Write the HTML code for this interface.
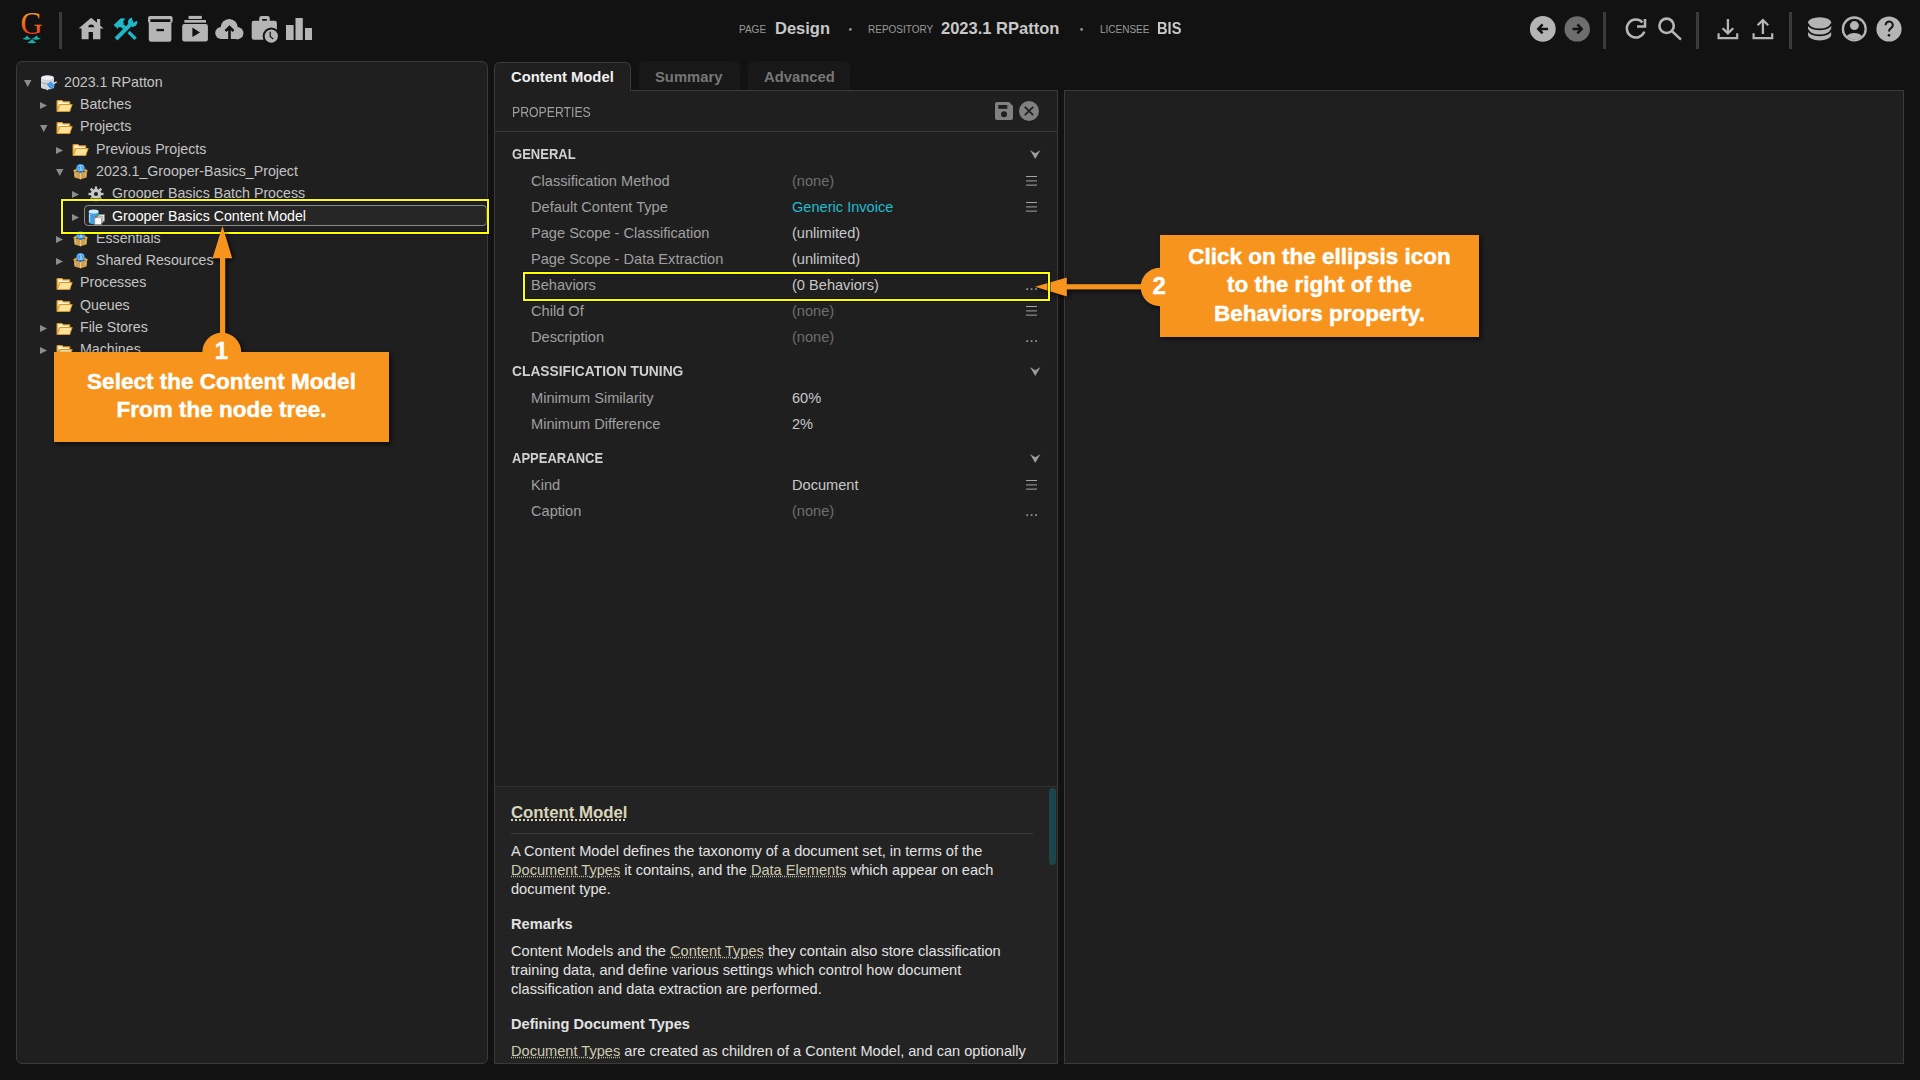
<!DOCTYPE html>
<html><head><meta charset="utf-8">
<style>
*{box-sizing:border-box;margin:0;padding:0}
html,body{width:1920px;height:1080px;overflow:hidden;background:#121212;font-family:"Liberation Sans",sans-serif;position:relative}
.a{position:absolute}
.t{position:absolute;white-space:nowrap;line-height:1}
svg{position:absolute;overflow:visible}
.sep{position:absolute;width:3px;background:#3a3a3a;top:12px;height:37px}
#left{left:16px;top:61px;width:472px;height:1003px;background:#1f1f1f;border:1px solid #3a3a3a;border-radius:6px}
#props{left:494px;top:90px;width:564px;height:974px;background:#1f1f1f;border:1px solid #3a3a3a}
#right{left:1064px;top:90px;width:840px;height:974px;background:#1f1f1f;border:1px solid #3a3a3a}
.tab{position:absolute;top:61px;height:29px;background:#181818;border-radius:6px 6px 0 0}
.tabt{font-weight:bold;font-size:14.8px;color:#777}
.tree{color:#c4c4c4;font-size:14.2px}
.lbl{color:#a0a0a0;font-size:14.6px}
.val{color:#c8c8c8;font-size:14.6px}
.none{color:#6e6e6e}
.sec{color:#d0d0d0;font-size:13.4px;font-weight:bold}
.help{color:#e2e2e2;font-size:14.9px}
.lk{color:#cfccb2;text-decoration:underline dotted #b8b6a0;text-underline-offset:1px}
.hh{color:#d9d5bb;font-weight:bold}
.uh{text-decoration:underline dotted #d9d5bb;text-decoration-thickness:2px;text-underline-offset:1px}
.orange{background:#f7941d;box-shadow:3px 3px 4px rgba(0,0,0,.6)}
.call{color:#fff;font-weight:bold;text-align:center;font-size:22.5px;line-height:28.5px;-webkit-text-stroke:0.45px #fff}
</style></head><body>
<svg width="0" height="0" style="position:absolute">
<defs>
<symbol id="i-folder" viewBox="0 0 17 16">
<path d="M1 2.5h5.2l1.2 1.3h6.4v9.7H1z" fill="#f3c96a" stroke="#d9962e" stroke-width="1"/>
<path d="M2.3 3.5h3.5l1.2 1.3h5.8v1.5H2.3z" fill="#fff6d6"/>
<path d="M1.3 13.5l2.6-7h12.3l-2.6 7z" fill="#fde39a" stroke="#d9962e" stroke-width="1"/>
</symbol>
<symbol id="i-db" viewBox="0 0 17 16">
<path d="M1 2.6C1 1.2 3.9 0.2 7.5 0.2S14 1.2 14 2.6V12c0 1.4-2.9 2.3-6.5 2.3S1 13.4 1 12z" fill="#d2d6dc"/>
<ellipse cx="7.5" cy="2.8" rx="5.6" ry="1.9" fill="#eef3f8"/>
<path d="M1.3 7.2c1 1 3.3 1.5 6.2 1.5s5.2-.5 6.2-1.5" stroke="#9aa2aa" stroke-width=".9" fill="none"/>
<path d="M1.6 5c.6.2.6 1 .2 1.2M1.6 9.6c.6.2.6 1 .2 1.2" stroke="#fff" stroke-width=".8" fill="none"/>
<path d="M7 9.6 L10.6 6.2 L15 10.6 L11.5 14.2 Z" fill="#4aa6ec"/>
<path d="M7.6 9.8 L11.2 13.5" stroke="#1f6fbf" stroke-width=".9"/>
<path d="M9.3 7.8 L13 11.6" stroke="#2a7dd0" stroke-width=".8"/>
<path d="M13.6 8.6 L16.6 6.8" stroke="#e8e8e8" stroke-width="1.4"/>
<path d="M8.2 13.5 L6.8 15.2" stroke="#e0dcd4" stroke-width="1.3"/>
</symbol>
<symbol id="i-pkg" viewBox="0 0 17 16">
<path d="M1.2 6.6 L4.2 4.6 L6 6.5 L2.4 8.4 Z" fill="#e8a838"/>
<path d="M15.8 6.6 L12.8 4.6 L11 6.5 L14.6 8.4 Z" fill="#e8a838"/>
<path d="M1.8 7.2 L8.5 8.6 L15.2 7.2 L14.6 13.4 L8.5 15.3 L2.4 13.4 Z" fill="#cf9f52"/>
<path d="M8.5 8.6 V15.3" stroke="#f0c878" stroke-width="1"/>
<path d="M3.6 9.6 V12.4 M13.4 9.6 V12.4" stroke="#e8cc90" stroke-width=".8"/>
<circle cx="8.5" cy="4.2" r="4.4" fill="#2a8ae0"/>
<circle cx="8.6" cy="3.9" r="3.2" fill="#8cc8f4"/>
<path d="M6 3.6 L7.4 2.6 L7.2 6 M9 2.4 L10.6 3.2 L11 5.6" stroke="#2a7ad0" stroke-width=".9" fill="none"/>
<circle cx="8.5" cy="7.6" r=".9" fill="#1a6ad0"/>
</symbol>
<symbol id="i-gear" viewBox="0 0 17 16">
<g transform="translate(8,8)" fill="#c8c8c8">
<circle r="5.2"/>
<rect x="-1.2" y="-7.5" width="2.4" height="15"/>
<rect x="-1.2" y="-7.5" width="2.4" height="15" transform="rotate(45)"/>
<rect x="-1.2" y="-7.5" width="2.4" height="15" transform="rotate(90)"/>
<rect x="-1.2" y="-7.5" width="2.4" height="15" transform="rotate(135)"/>
<circle r="2" fill="#1f1f1f"/>
</g>
</symbol>
<symbol id="i-cm" viewBox="0 0 17 16">
<path d="M0.8 2.6v10.6c0 1.1 2.2 2 4.9 2s4.9-.9 4.9-2V2.6z" fill="#3f9fe0"/>
<path d="M1.6 4.5v8.6" stroke="#a8dcfa" stroke-width="1.1"/>
<ellipse cx="5.7" cy="2.6" rx="4.9" ry="2" fill="#cfeeff"/>
<rect x="10" y="5.6" width="6.4" height="6.6" fill="#f2f2f2" stroke="#8a8a8a" stroke-width=".7"/>
<rect x="8.4" y="7.2" width="6.4" height="6.6" fill="#f6f6f6" stroke="#8a8a8a" stroke-width=".7"/>
<rect x="6.8" y="8.8" width="6.6" height="6.8" fill="#ffffff" stroke="#8a8a8a" stroke-width=".7"/>
<path d="M7.2 8.6 q1-1.6 2.4-1.4" stroke="#e03a2a" stroke-width="1.2" fill="none"/>
<path d="M9.4 7 q.8-1.4 2.2-1.4" stroke="#2eb04a" stroke-width="1.1" fill="none"/>
</symbol>
</defs></svg>
<!-- top bar -->
<svg class="a" style="left:0;top:0" width="1920" height="60">
<defs>
<linearGradient id="gG" x1="0" y1="0" x2="0" y2="1"><stop offset="0.1" stop-color="#f7a51c"/><stop offset="1" stop-color="#e8201f"/></linearGradient>
</defs>
<text x="20.6" y="33.9" font-family="Liberation Serif" font-size="30.5" fill="url(#gG)">G</text>
<path d="M22.2 38.8 Q25 38.4 27 35.4 Q29 38.4 31.2 38.8 Q26.7 40.6 22.2 38.8z M31.6 38.8 Q34.4 38.4 36.4 35.4 Q38.4 38.4 41 38.8 Q36.3 40.6 31.6 38.8z M27.2 42.4 Q30 42 32 39 Q34 42 36.4 42.4 Q31.8 44.2 27.2 42.4z" fill="#1aaea8"/>
<!-- home -->
<path d="M78.6 28.6 L91.2 17.7 L97 22.7 V19 H100.2 V25.5 L103.6 28.6 H100.4 V39.2 H93 V32 H88.6 V39.2 H81.6 V28.6 Z" fill="#b5b5b5"/>
<path d="M88.3 27.2 a2.9 2.6 0 0 1 5.8 0z" fill="#121212"/>
<!-- tools -->
<g fill="#20b8c8">
<path d="M114.6 37.6 L128.4 23.8 L131.2 26.6 L117.4 40.4 Z"/>
<circle cx="132.6" cy="22.3" r="4.7"/>
<path d="M113.6 25.1 L120.8 18.2 L125.4 18.4 L123.1 21.4 L123.8 23.2 L123.5 24.6 L126.2 26.4 L122.9 29.2 L121.6 27.6 L118.4 27.1 L117.8 29 L116 27.3 Z"/>
<path d="M128.6 32 L135.6 38.9" stroke="#20b8c8" stroke-width="3.3"/>
</g>
<path d="M131.3 15.8 L139.2 19.6 L133.3 22.7 Z" fill="#121212"/>
<!-- archive -->
<rect x="148" y="16" width="24.6" height="7" rx="2" fill="#b5b5b5"/>
<rect x="150.4" y="19.2" width="20" height="2.8" fill="#121212"/>
<path d="M148.8 22.2 H171.4 V39.6 a2.2 2.2 0 0 1 -2.2 2.2 H151 a2.2 2.2 0 0 1 -2.2 -2.2 Z" fill="#b5b5b5"/>
<rect x="156.5" y="28.9" width="7.5" height="2.3" fill="#121212"/>
<!-- play stack -->
<rect x="188.6" y="15.9" width="13.2" height="3.1" fill="#b5b5b5"/>
<rect x="184.4" y="20" width="21.6" height="2.7" fill="#b5b5b5"/>
<rect x="182.2" y="23.9" width="25.7" height="17.7" rx="2.3" fill="#b5b5b5"/>
<path d="M192.4 27.6 L200 32.4 L192.4 37.1 Z" fill="#121212"/>
<!-- cloud -->
<g fill="#b5b5b5">
<circle cx="229.2" cy="27.6" r="8.6"/>
<circle cx="221.2" cy="33" r="6"/>
<circle cx="237.2" cy="33.2" r="6.2"/>
<rect x="221" y="31" width="16" height="8"/>
</g>
<path d="M229.5 39 V27 M225.5 31 L229.5 27 L233.5 31" stroke="#121212" stroke-width="2.6" fill="none"/>
<!-- briefcase clock -->
<path d="M259.2 21 V18.3 a2.4 2.4 0 0 1 2.4 -2.4 H267.4 a2.4 2.4 0 0 1 2.4 2.4 V21 H266.8 V19 H262.2 V21 Z" fill="#b5b5b5"/>
<rect x="251.7" y="20.8" width="25.2" height="18.9" rx="2.2" fill="#b5b5b5"/>
<circle cx="271.3" cy="36.2" r="8.6" fill="#121212"/>
<circle cx="271.3" cy="36.2" r="6.6" fill="#b5b5b5"/>
<path d="M270.2 31.8 V36.4 L273.2 39" stroke="#121212" stroke-width="1.2" fill="none"/>
<!-- bars -->
<rect x="286" y="25" width="7.6" height="15" fill="#b5b5b5"/>
<rect x="295.5" y="18" width="7.3" height="22" fill="#b5b5b5"/>
<rect x="305" y="28" width="7" height="12" fill="#b5b5b5"/>
<!-- center dots -->
<circle cx="850.4" cy="29.4" r="1.3" fill="#9a9a9a"/>
<circle cx="1081.6" cy="29.4" r="1.3" fill="#9a9a9a"/>
<!-- back / fwd -->
<circle cx="1542.8" cy="28.9" r="12.9" fill="#b5b5b5"/>
<path d="M1542.6 24.4 L1538.3 28.9 L1542.6 33.3 M1538.6 28.9 H1548.1" stroke="#121212" stroke-width="2.5" fill="none"/>
<circle cx="1577.2" cy="28.9" r="12.7" fill="#6e6e6e"/>
<path d="M1577.4 24.4 L1581.7 28.9 L1577.4 33.3 M1581.4 28.9 H1572.5" stroke="#121212" stroke-width="2.5" fill="none"/>
<!-- refresh -->
<path d="M1642.4 22.4 A9 9 0 1 0 1644.3 31.6" stroke="#b5b5b5" stroke-width="2.5" fill="none"/>
<path d="M1637 26.5 H1645 V19" stroke="#b5b5b5" stroke-width="2.6" fill="none"/>
<!-- search -->
<circle cx="1666.6" cy="25.8" r="7.2" stroke="#b5b5b5" stroke-width="2.6" fill="none"/>
<path d="M1671.8 31 L1681 39.6" stroke="#b5b5b5" stroke-width="2.5"/>
<!-- download -->
<path d="M1718.6 33.2 V38.1 H1737.2 V33.2" stroke="#b5b5b5" stroke-width="2.2" fill="none"/>
<path d="M1727.9 19 V33.4 M1722.6 28.2 L1727.9 33.4 L1733.2 28.2" stroke="#b5b5b5" stroke-width="2.3" fill="none"/>
<!-- upload -->
<path d="M1753.6 33.2 V38.1 H1772.2 V33.2" stroke="#b5b5b5" stroke-width="2.2" fill="none"/>
<path d="M1762.9 34 V20 M1757.6 25.2 L1762.9 20 L1768.2 25.2" stroke="#b5b5b5" stroke-width="2.3" fill="none"/>
<!-- database -->
<path d="M1808 22.5 V35 A11.6 5.4 0 0 0 1831.2 35 V22.5 Z" fill="#b5b5b5"/>
<ellipse cx="1819.6" cy="22.5" rx="11.6" ry="5.3" fill="#b5b5b5"/>
<path d="M1808 23.6 A11.6 5.8 0 0 0 1831.2 23.6 M1808 29.6 A11.6 5.8 0 0 0 1831.2 29.6" stroke="#121212" stroke-width="1.7" fill="none"/>
<!-- user -->
<circle cx="1854.3" cy="28.9" r="11.4" stroke="#b5b5b5" stroke-width="2.3" fill="none"/>
<circle cx="1854.4" cy="25.6" r="4.5" fill="#b5b5b5"/>
<clipPath id="uc"><circle cx="1854.3" cy="28.9" r="10.5"/></clipPath>
<circle cx="1854.3" cy="44.5" r="11.6" fill="#b5b5b5" clip-path="url(#uc)"/>
<!-- help -->
<circle cx="1889" cy="29" r="12.6" fill="#b5b5b5"/>
<path d="M1885.6 25.2 a3.6 3.4 0 1 1 5.6 2.6 c-1.6 1 -2.2 1.6 -2.2 3.6" stroke="#121212" stroke-width="2" fill="none"/>
<circle cx="1889" cy="35.2" r="1.3" fill="#121212"/>
</svg>
<div class="sep" style="left:59px"></div>
<div class="sep" style="left:1603px"></div>
<div class="sep" style="left:1696px"></div>
<div class="sep" style="left:1789px"></div>

<div class="t" style="left:739px;top:24.8px;font-size:10px;color:#9a9a9a">PAGE</div>
<div class="t" style="left:775px;top:20px;font-size:16.5px;font-weight:bold;color:#c8c8c8">Design</div>
<div class="t" style="left:848px;top:24.8px;font-size:10px;color:#9a9a9a">·</div>
<div class="t" style="left:868px;top:24.8px;font-size:10px;color:#9a9a9a">REPOSITORY</div>
<div class="t" style="left:941px;top:20px;font-size:16.5px;font-weight:bold;color:#c8c8c8">2023.1 RPatton</div>
<div class="t" style="left:1080px;top:24.8px;font-size:10px;color:#9a9a9a">·</div>
<div class="t" style="left:1100px;top:24.8px;font-size:10px;color:#9a9a9a">LICENSEE</div>
<div class="t" style="left:1157px;top:20px;font-size:16.5px;font-weight:bold;color:#c8c8c8;transform:scaleX(0.89);transform-origin:0 0">BIS</div>

<!-- panels -->
<div id="left" class="a"></div>
<div id="props" class="a"></div>
<div id="right" class="a"></div>

<!-- tabs -->
<div class="a" style="left:494px;top:62px;width:137px;height:29px;background:#1f1f1f;border:1px solid #3a3a3a;border-bottom:none;border-radius:6px 6px 0 0"></div>
<div class="t tabt" style="left:511px;top:69.8px;color:#f0f0f0">Content Model</div>
<div class="tab" style="left:639px;width:101px"></div>
<div class="t tabt" style="left:655px;top:69.5px">Summary</div>
<div class="tab" style="left:748px;width:102px"></div>
<div class="t tabt" style="left:764px;top:69.5px">Advanced</div>

<!-- props -->
<div class="t lbl" style="left:511.5px;top:104.64px;font-size:14.6px;transform:scaleX(0.84);transform-origin:0 0">PROPERTIES</div>
<svg class="a" style="left:995px;top:102px" width="18" height="18"><path d="M0 2a2 2 0 0 1 2-2h12l4 4v12a2 2 0 0 1-2 2H2a2 2 0 0 1-2-2z" fill="#808080"/><rect x="3.3" y="3" width="9" height="3.8" fill="#1f1f1f"/><circle cx="9" cy="12.3" r="3" fill="#1f1f1f"/></svg>
<svg class="a" style="left:1019px;top:101px" width="20" height="20"><circle cx="10" cy="10" r="10" fill="#808080"/><path d="M5.8 5.8l8.4 8.4M14.2 5.8l-8.4 8.4" stroke="#1f1f1f" stroke-width="1.8"/></svg>
<div class="a" style="left:495px;top:131px;width:562px;height:1px;background:#3a3a3a"></div>
<div class="t sec" style="left:511.5px;top:147.15px;font-size:14px;transform:scaleX(0.93);transform-origin:0 0">GENERAL</div>
<svg class="a" style="left:1029.5px;top:150px" width="11" height="9"><polygon points="0,0 5.25,3.2 10.5,0 5.25,9" fill="#9a9a9a"/></svg>
<div class="t lbl" style="left:531px;top:173.64px;font-size:14.6px">Classification Method</div>
<div class="t val none" style="left:792px;top:173.64px;font-size:14.6px">(none)</div>
<svg class="a" style="left:1026px;top:174.8px" width="11" height="11"><path d="M0 1.5h11M0 5.9h11M0 10.1h11" stroke="#a4a4a4" stroke-width="1"/></svg>
<div class="t lbl" style="left:531px;top:199.64px;font-size:14.6px">Default Content Type</div>
<div class="t val" style="left:792px;top:199.64px;font-size:14.6px;color:#1fbccf">Generic Invoice</div>
<svg class="a" style="left:1026px;top:200.8px" width="11" height="11"><path d="M0 1.5h11M0 5.9h11M0 10.1h11" stroke="#a4a4a4" stroke-width="1"/></svg>
<div class="t lbl" style="left:531px;top:225.64px;font-size:14.6px">Page Scope - Classification</div>
<div class="t val" style="left:792px;top:225.64px;font-size:14.6px">(unlimited)</div>
<div class="t lbl" style="left:531px;top:251.64px;font-size:14.6px">Page Scope - Data Extraction</div>
<div class="t val" style="left:792px;top:251.64px;font-size:14.6px">(unlimited)</div>
<div class="t lbl" style="left:531px;top:277.64px;font-size:14.6px">Behaviors</div>
<div class="t val" style="left:792px;top:277.64px;font-size:14.6px">(0 Behaviors)</div>
<svg class="a" style="left:1025.5px;top:288px" width="12" height="3"><rect x="0.3" y="0.2" width="1.8" height="1.8" fill="#8e8e8e"/><rect x="4.7" y="0.2" width="1.8" height="1.8" fill="#8e8e8e"/><rect x="9.1" y="0.2" width="1.8" height="1.8" fill="#8e8e8e"/></svg>
<div class="t lbl" style="left:531px;top:303.64px;font-size:14.6px">Child Of</div>
<div class="t val none" style="left:792px;top:303.64px;font-size:14.6px">(none)</div>
<svg class="a" style="left:1026px;top:304.8px" width="11" height="11"><path d="M0 1.5h11M0 5.9h11M0 10.1h11" stroke="#a4a4a4" stroke-width="1"/></svg>
<div class="t lbl" style="left:531px;top:329.64px;font-size:14.6px">Description</div>
<div class="t val none" style="left:792px;top:329.64px;font-size:14.6px">(none)</div>
<svg class="a" style="left:1025.5px;top:340px" width="12" height="3"><rect x="0.3" y="0.2" width="1.8" height="1.8" fill="#8e8e8e"/><rect x="4.7" y="0.2" width="1.8" height="1.8" fill="#8e8e8e"/><rect x="9.1" y="0.2" width="1.8" height="1.8" fill="#8e8e8e"/></svg>
<div class="t sec" style="left:511.5px;top:363.9px;font-size:14px;transform:scaleX(0.985);transform-origin:0 0">CLASSIFICATION TUNING</div>
<svg class="a" style="left:1029.5px;top:366.8px" width="11" height="9"><polygon points="0,0 5.25,3.2 10.5,0 5.25,9" fill="#9a9a9a"/></svg>
<div class="t lbl" style="left:531px;top:390.64px;font-size:14.6px">Minimum Similarity</div>
<div class="t val" style="left:792px;top:390.64px;font-size:14.6px">60%</div>
<div class="t lbl" style="left:531px;top:416.64px;font-size:14.6px">Minimum Difference</div>
<div class="t val" style="left:792px;top:416.64px;font-size:14.6px">2%</div>
<div class="t sec" style="left:511.5px;top:451.15px;font-size:14px;transform:scaleX(0.93);transform-origin:0 0">APPEARANCE</div>
<svg class="a" style="left:1029.5px;top:454px" width="11" height="9"><polygon points="0,0 5.25,3.2 10.5,0 5.25,9" fill="#9a9a9a"/></svg>
<div class="t lbl" style="left:531px;top:477.64px;font-size:14.6px">Kind</div>
<div class="t val" style="left:792px;top:477.64px;font-size:14.6px">Document</div>
<svg class="a" style="left:1026px;top:478.8px" width="11" height="11"><path d="M0 1.5h11M0 5.9h11M0 10.1h11" stroke="#a4a4a4" stroke-width="1"/></svg>
<div class="t lbl" style="left:531px;top:503.64px;font-size:14.6px">Caption</div>
<div class="t val none" style="left:792px;top:503.64px;font-size:14.6px">(none)</div>
<svg class="a" style="left:1025.5px;top:514px" width="12" height="3"><rect x="0.3" y="0.2" width="1.8" height="1.8" fill="#8e8e8e"/><rect x="4.7" y="0.2" width="1.8" height="1.8" fill="#8e8e8e"/><rect x="9.1" y="0.2" width="1.8" height="1.8" fill="#8e8e8e"/></svg>
<!-- help -->
<div class="a" style="left:495px;top:786px;width:562px;height:277px;background:#232323;border-top:1px solid #303030;overflow:hidden">
<div class="t hh" style="left:16px;top:18.3px;font-size:16.8px"><span class="uh">Content Model</span></div>
<div class="a" style="left:16px;top:46px;width:522px;height:1px;background:#3a3a3a"></div>
<div class="t help" style="left:16px;top:57.24px;font-size:14.6px">A Content Model defines the taxonomy of a document set, in terms of the</div>
<div class="t help" style="left:16px;top:76.14px;font-size:14.6px"><span class="lk">Document Types</span> it contains, and the <span class="lk">Data Elements</span> which appear on each</div>
<div class="t help" style="left:16px;top:94.94px;font-size:14.6px">document type.</div>
<div class="t help" style="left:16px;top:156.6px;font-size:14.6px">Content Models and the <span class="lk">Content Types</span> they contain also store classification</div>
<div class="t help" style="left:16px;top:175.6px;font-size:14.6px">training data, and define various settings which control how document</div>
<div class="t help" style="left:16px;top:194.5px;font-size:14.6px">classification and data extraction are performed.</div>
<div class="t help" style="left:16px;top:256.9px;font-size:14.6px"><span class="lk">Document Types</span> are created as children of a Content Model, and can optionally</div>
<div class="t help" style="left:16px;top:129.9px;font-size:14.6px;font-weight:bold">Remarks</div>
<div class="t help" style="left:16px;top:229.9px;font-size:14.6px;font-weight:bold">Defining Document Types</div>
</div>
<div class="a" style="left:1049px;top:788px;width:7px;height:77px;background:#1a464c;border-radius:4px"></div>
<!-- tree -->
<div class="a" style="left:84px;top:205px;width:403px;height:21px;background:#262626;border:1px solid #8a8a8a;border-radius:4px"></div>
<svg class="a" style="left:24px;top:80.1px" width="8" height="7"><polygon points="0,0 7.5,0 3.75,7" fill="#8c8c8c"/></svg>
<svg class="a" style="left:40px;top:74.8px" width="17" height="16"><use href="#i-db"/></svg>
<div class="t tree" style="left:64px;top:74.7px">2023.1 RPatton</div>
<svg class="a" style="left:40px;top:102.0px" width="8" height="7"><polygon points="0,0 7,3.5 0,7" fill="#8c8c8c"/></svg>
<svg class="a" style="left:56px;top:97.5px" width="17" height="16"><use href="#i-folder"/></svg>
<div class="t tree" style="left:80px;top:97.0px">Batches</div>
<svg class="a" style="left:40px;top:124.7px" width="8" height="7"><polygon points="0,0 7.5,0 3.75,7" fill="#8c8c8c"/></svg>
<svg class="a" style="left:56px;top:119.8px" width="17" height="16"><use href="#i-folder"/></svg>
<div class="t tree" style="left:80px;top:119.3px">Projects</div>
<svg class="a" style="left:56px;top:146.6px" width="8" height="7"><polygon points="0,0 7,3.5 0,7" fill="#8c8c8c"/></svg>
<svg class="a" style="left:72px;top:142.1px" width="17" height="16"><use href="#i-folder"/></svg>
<div class="t tree" style="left:96px;top:141.6px">Previous Projects</div>
<svg class="a" style="left:56px;top:169.3px" width="8" height="7"><polygon points="0,0 7.5,0 3.75,7" fill="#8c8c8c"/></svg>
<svg class="a" style="left:72px;top:164.0px" width="17" height="16"><use href="#i-pkg"/></svg>
<div class="t tree" style="left:96px;top:163.9px">2023.1_Grooper-Basics_Project</div>
<svg class="a" style="left:72px;top:191.2px" width="8" height="7"><polygon points="0,0 7,3.5 0,7" fill="#8c8c8c"/></svg>
<svg class="a" style="left:88px;top:186.3px" width="17" height="16"><use href="#i-gear"/></svg>
<div class="t tree" style="left:112px;top:186.2px">Grooper Basics Batch Process</div>
<svg class="a" style="left:72px;top:213.5px" width="8" height="7"><polygon points="0,0 7,3.5 0,7" fill="#8c8c8c"/></svg>
<svg class="a" style="left:88px;top:208.6px" width="17" height="16"><use href="#i-cm"/></svg>
<div class="t tree" style="left:112px;top:208.5px;color:#ffffff">Grooper Basics Content Model</div>
<svg class="a" style="left:56px;top:235.8px" width="8" height="7"><polygon points="0,0 7,3.5 0,7" fill="#8c8c8c"/></svg>
<svg class="a" style="left:72px;top:230.9px" width="17" height="16"><use href="#i-pkg"/></svg>
<div class="t tree" style="left:96px;top:230.8px">Essentials</div>
<svg class="a" style="left:56px;top:258.1px" width="8" height="7"><polygon points="0,0 7,3.5 0,7" fill="#8c8c8c"/></svg>
<svg class="a" style="left:72px;top:253.2px" width="17" height="16"><use href="#i-pkg"/></svg>
<div class="t tree" style="left:96px;top:253.1px">Shared Resources</div>
<svg class="a" style="left:56px;top:275.9px" width="17" height="16"><use href="#i-folder"/></svg>
<div class="t tree" style="left:80px;top:275.4px">Processes</div>
<svg class="a" style="left:56px;top:298.2px" width="17" height="16"><use href="#i-folder"/></svg>
<div class="t tree" style="left:80px;top:297.7px">Queues</div>
<svg class="a" style="left:40px;top:325.0px" width="8" height="7"><polygon points="0,0 7,3.5 0,7" fill="#8c8c8c"/></svg>
<svg class="a" style="left:56px;top:320.5px" width="17" height="16"><use href="#i-folder"/></svg>
<div class="t tree" style="left:80px;top:320.0px">File Stores</div>
<svg class="a" style="left:40px;top:347.3px" width="8" height="7"><polygon points="0,0 7,3.5 0,7" fill="#8c8c8c"/></svg>
<svg class="a" style="left:56px;top:342.8px" width="17" height="16"><use href="#i-folder"/></svg>
<div class="t tree" style="left:80px;top:342.3px">Machines</div>
<div class="a" style="left:61px;top:199px;width:428px;height:35px;border:2px solid #ffff00;box-shadow:0 0 0 1px rgba(0,0,20,.45),inset 0 0 0 1px rgba(0,0,20,.45)"></div>
<!-- callouts -->
<svg class="a" style="left:0;top:0;filter:drop-shadow(2.5px 2.5px 2.5px rgba(0,0,0,.65))" width="1920" height="1080">
<polygon points="222.5,226 212.5,258.2 232.2,258.2" fill="#f7941d"/>
<rect x="220" y="256" width="5.2" height="80" fill="#f7941d"/>
<circle cx="221.8" cy="352.2" r="19.5" fill="#f7941d"/>
<rect x="54" y="352" width="335" height="90" fill="#f7941d"/>
<polygon points="1035,286.8 1066.8,277.4 1066.8,296.4" fill="#f7941d"/>
<rect x="1064" y="284.2" width="80" height="5.2" fill="#f7941d"/>
<circle cx="1160" cy="287" r="19.3" fill="#f7941d"/>
<rect x="1160" y="235" width="319" height="102" fill="#f7941d"/>
</svg>
<div class="t call" style="left:21.5px;width:400px;top:339px;font-size:24px;line-height:1">1</div>
<div class="t call" style="left:21.5px;width:400px;top:370.85px;font-size:22.5px;line-height:1">Select the Content Model</div>
<div class="t call" style="left:21.5px;width:400px;top:398.95px;font-size:22.5px;line-height:1">From the node tree.</div>
<div class="t call" style="left:1129.2px;width:60px;top:274.4px;font-size:24px;line-height:1">2</div>
<div class="t call" style="left:1119.5px;width:400px;top:245.75px;font-size:22.5px;line-height:1">Click on the ellipsis icon</div>
<div class="t call" style="left:1119.5px;width:400px;top:273.95px;font-size:22.5px;line-height:1">to the right of the</div>
<div class="t call" style="left:1119.5px;width:400px;top:302.55px;font-size:22.5px;line-height:1">Behaviors property.</div>
<div class="a" style="left:523px;top:272px;width:527px;height:29px;border:2px solid #ffff00;box-shadow:0 0 0 1px rgba(0,0,20,.45),inset 0 0 0 1px rgba(0,0,20,.45)"></div>
</body></html>
